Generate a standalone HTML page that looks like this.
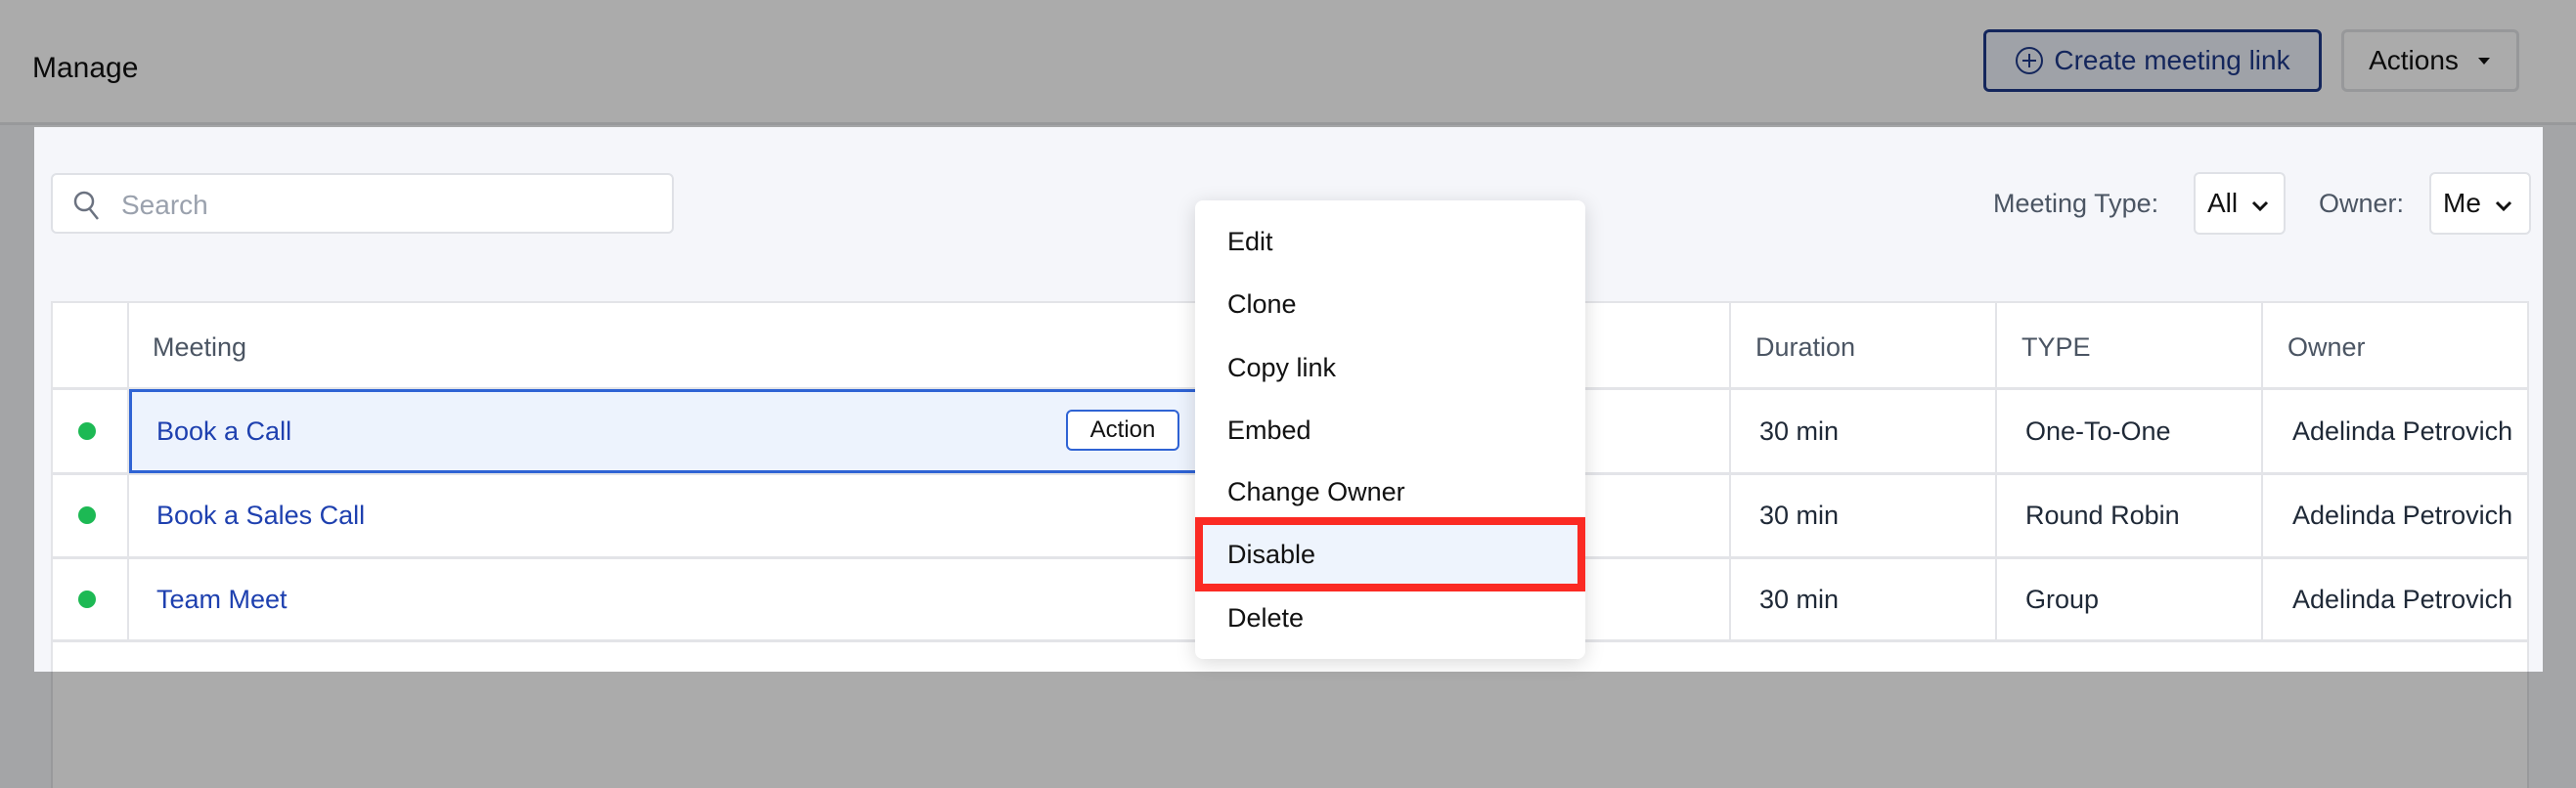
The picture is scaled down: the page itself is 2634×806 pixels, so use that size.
<!DOCTYPE html>
<html><head><meta charset="utf-8"><style>
*{margin:0;padding:0;box-sizing:border-box}
html,body{width:2634px;height:806px;overflow:hidden}
body{background:#f5f6fa;font-family:"Liberation Sans",Arial,sans-serif;position:relative}
.abs{position:absolute}
.hdr{left:0;top:0;width:2634px;height:128px;background:#fff;border-bottom:3px solid #e3e4e8}
.title{left:33px;top:53px;font-size:30px;color:#111}
.btn{border-radius:6px;display:flex;align-items:center;justify-content:center;font-size:28px}
.create{left:2028px;top:30px;width:346px;height:64px;border:3px solid #1e3a8a;background:#eef2fb;color:#1e3a8a}
.actions{left:2394px;top:30px;width:182px;height:64px;border:3px solid #e2e3e6;background:#fff;color:#111}
.search{left:52px;top:177px;width:637px;height:62px;border:2px solid #dfe1e6;border-radius:6px;background:#fff}
.search span{position:absolute;left:70px;top:15px;font-size:28px;color:#9aa1ad}
.lbl{font-size:27px;color:#4b5563}
.sel{border:2px solid #dfe1e6;border-radius:6px;background:#fff;font-size:28px;color:#111;padding:14px 0 0 12px}
.tbl{left:52px;top:308px;width:2534px;height:498px;background:#fff;border:2px solid #e3e4e8;border-bottom:none}
.hline{height:3px;background:#e3e4e8;left:52px;width:2534px}
.vline{width:2px;background:#e3e4e8}
.th{font-size:27px;color:#4b5563}
.td{font-size:27px;color:#1f2937}
.lnk{font-size:27px;color:#1e40af}
.dot{width:18px;height:18px;border-radius:50%;background:#1db954}
.dim{left:35px;top:130px;width:2565px;height:557px;box-shadow:0 0 0 4000px rgba(0,0,0,0.33)}
.menu{left:1222px;top:205px;width:399px;height:469px;background:#fff;border-radius:8px;box-shadow:0 4px 20px rgba(0,0,0,0.15)}
.mi{position:absolute;left:33px;font-size:27px;color:#111}
</style></head><body>
<div class="abs hdr"></div>
<div class="abs title">Manage</div>
<div class="abs btn create"><svg width="30" height="30" viewBox="0 0 30 30" style="margin-right:10px"><circle cx="15" cy="15" r="13" fill="none" stroke="#1e3a8a" stroke-width="2"/><path d="M15 8v14M8 15h14" stroke="#1e3a8a" stroke-width="2"/></svg>Create meeting link</div>
<div class="abs btn actions">Actions<svg width="16" height="10" viewBox="0 0 16 10" style="margin-left:18px"><path d="M2 2h12L8 9z" fill="#111"/></svg></div>

<div class="abs search"><svg class="abs" style="left:20px;top:14px" width="30" height="34" viewBox="0 0 30 34"><circle cx="12" cy="13" r="9" fill="none" stroke="#6b7280" stroke-width="2.5"/><path d="M18 21l8 10" stroke="#6b7280" stroke-width="2.5"/></svg><span>Search</span></div>
<div class="abs lbl" style="left:2038px;top:193px">Meeting Type:</div>
<div class="abs sel" style="left:2243px;top:176px;width:94px;height:64px">All <svg width="18" height="12" viewBox="0 0 18 12" style="margin-left:6px"><path d="M2 2l7 7 7-7" fill="none" stroke="#111" stroke-width="3"/></svg></div>
<div class="abs lbl" style="left:2371px;top:193px">Owner:</div>
<div class="abs sel" style="left:2484px;top:176px;width:104px;height:64px">Me <svg width="18" height="12" viewBox="0 0 18 12" style="margin-left:6px"><path d="M2 2l7 7 7-7" fill="none" stroke="#111" stroke-width="3"/></svg></div>

<div class="abs tbl"></div>
<div class="abs hline" style="top:396px"></div>
<div class="abs hline" style="top:483px"></div>
<div class="abs hline" style="top:569px"></div>
<div class="abs hline" style="top:654px"></div>
<div class="abs vline" style="left:130px;top:308px;height:347px"></div>
<div class="abs vline" style="left:1768px;top:308px;height:347px"></div>
<div class="abs vline" style="left:2040px;top:308px;height:347px"></div>
<div class="abs vline" style="left:2312px;top:308px;height:347px"></div>
<div class="abs th" style="left:156px;top:340px">Meeting</div>
<div class="abs th" style="left:1795px;top:340px">Duration</div>
<div class="abs th" style="left:2067px;top:340px">TYPE</div>
<div class="abs th" style="left:2339px;top:340px">Owner</div>

<div class="abs" style="left:132px;top:398px;width:1100px;height:86px;background:#edf3fd;border:3px solid #2f63d4;border-right:none"></div>
<div class="abs" style="left:1090px;top:419px;width:116px;height:42px;border:2px solid #2f63d4;border-radius:6px;background:#fff;font-size:24px;color:#111;text-align:center;line-height:38px">Action</div>

<div class="abs dot" style="left:80px;top:432px"></div>
<div class="abs dot" style="left:80px;top:518px"></div>
<div class="abs dot" style="left:80px;top:604px"></div>
<div class="abs lnk" style="left:160px;top:426px">Book a Call</div>
<div class="abs lnk" style="left:160px;top:512px">Book a Sales Call</div>
<div class="abs lnk" style="left:160px;top:598px">Team Meet</div>
<div class="abs td" style="left:1799px;top:426px">30 min</div>
<div class="abs td" style="left:1799px;top:512px">30 min</div>
<div class="abs td" style="left:1799px;top:598px">30 min</div>
<div class="abs td" style="left:2071px;top:426px">One-To-One</div>
<div class="abs td" style="left:2071px;top:512px">Round Robin</div>
<div class="abs td" style="left:2071px;top:598px">Group</div>
<div class="abs td" style="left:2344px;top:426px;width:240px;overflow:hidden;white-space:nowrap">Adelinda Petrovich</div>
<div class="abs td" style="left:2344px;top:512px;width:240px;overflow:hidden;white-space:nowrap">Adelinda Petrovich</div>
<div class="abs td" style="left:2344px;top:598px;width:240px;overflow:hidden;white-space:nowrap">Adelinda Petrovich</div>

<div class="abs dim"></div>

<div class="abs menu">
<div class="mi" style="top:27px">Edit</div>
<div class="mi" style="top:91px">Clone</div>
<div class="mi" style="top:156px">Copy link</div>
<div class="mi" style="top:220px">Embed</div>
<div class="mi" style="top:283px">Change Owner</div>
<div style="position:absolute;left:0;top:324px;width:399px;height:76px;border:8px solid #fb2a23;background:#eef4fd"></div>
<div class="mi" style="top:347px">Disable</div>
<div class="mi" style="top:412px">Delete</div>
</div>
</body></html>
